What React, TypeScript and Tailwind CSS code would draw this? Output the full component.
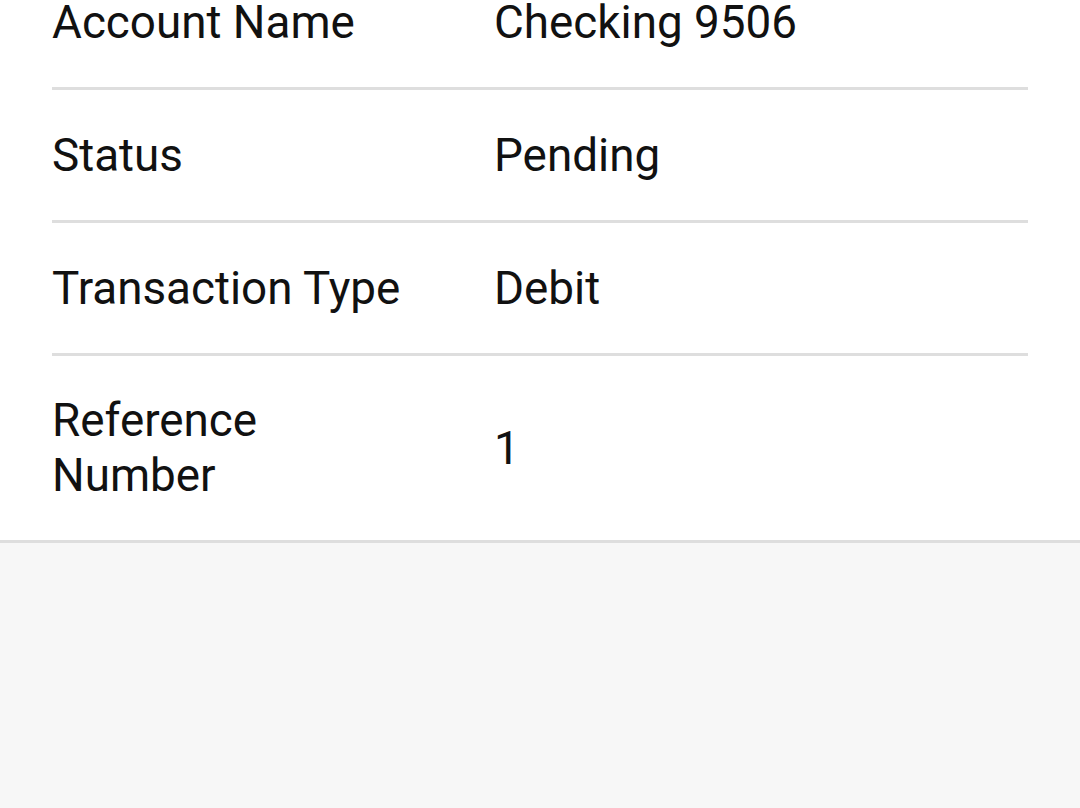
const rows = [
  { label: "Account Name", value: "Checking 9506" },
  { label: "Status", value: "Pending" },
  { label: "Transaction Type", value: "Debit" },
  { label: "Reference Number", value: "1" },
];

export default function App() {
  return (
    <div
      className="h-[808px] w-[1080px] overflow-hidden bg-[#f7f7f7]"
      style={{ fontFamily: "Roboto, 'Noto Sans', sans-serif" }}
    >
      <div className="-mt-[43px] border-b-[3px] border-[#dedede] bg-white">
        <ul className="px-[52px]">
          {rows.map((r, i) => (
            <li
              key={r.label}
              className={
                i < rows.length - 1
                  ? "flex min-h-[133px] items-center border-b-[3px] border-[#dedede] py-[37px]"
                  : "flex min-h-[130px] items-center py-[37px]"
              }
            >
              <span className="w-[443px] shrink-0 pr-[80px] text-[45.8px] leading-[55px] text-[#111]">
                {r.label}
              </span>
              <span className="-ml-px text-[45.8px] leading-[55px] text-[#111]">{r.value}</span>
            </li>
          ))}
        </ul>
      </div>
    </div>
  );
}
